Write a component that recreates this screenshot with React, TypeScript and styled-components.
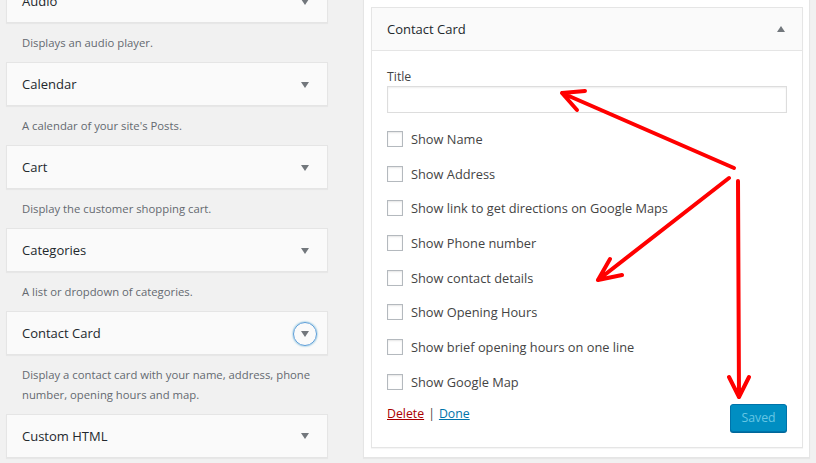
import { FC } from 'react'
import styled, { createGlobalStyle, css } from 'styled-components'

const GlobalStyle = createGlobalStyle`
  html, body {
    margin: 0;
    padding: 0;
    background: #f1f1f1;
    overflow: hidden;
  }

  body {
    font-family: 'Open Sans', 'Noto Sans', sans-serif;
    color: #444;
  }
`

interface AvailableWidget {
  title: string
  description: string
  focused?: boolean
}

const availableWidgets: AvailableWidget[] = [
  { title: 'Audio', description: 'Displays an audio player.' },
  { title: 'Calendar', description: "A calendar of your site's Posts." },
  { title: 'Cart', description: 'Display the customer shopping cart.' },
  { title: 'Categories', description: 'A list or dropdown of categories.' },
  {
    title: 'Contact Card',
    description: 'Display a contact card with your name, address, phone number, opening hours and map.',
    focused: true
  },
  { title: 'Custom HTML', description: '' }
]

const contactOptions = [
  'Show Name',
  'Show Address',
  'Show link to get directions on Google Maps',
  'Show Phone number',
  'Show contact details',
  'Show Opening Hours',
  'Show brief opening hours on one line',
  'Show Google Map'
]

const App: FC = () => {
  return (
    <>
      <GlobalStyle />
      <Page>
        <WidgetList>
          {availableWidgets.map((widget) => (
            <div key={widget.title}>
              <WidgetTop>
                <WidgetTitle>{widget.title}</WidgetTitle>
                <Toggle $focused={widget.focused}>
                  <Triangle />
                </Toggle>
              </WidgetTop>
              {widget.description && <WidgetDescription>{widget.description}</WidgetDescription>}
            </div>
          ))}
        </WidgetList>

        <SidebarColumn>
          <SidebarHolder>
            <Widget>
              <WidgetHeader>
                <HeaderTitle>Contact Card</HeaderTitle>
                <Triangle $up />
              </WidgetHeader>
              <WidgetInside>
                <FieldLabel>Title</FieldLabel>
                <TextInput type="text" />
                <OptionList>
                  {contactOptions.map((option) => (
                    <OptionRow key={option}>
                      <Checkbox type="checkbox" />
                      <span>{option}</span>
                    </OptionRow>
                  ))}
                </OptionList>
                <WidgetFooter>
                  <Links>
                    <DeleteLink href="#">Delete</DeleteLink>
                    <Separator>|</Separator>
                    <DoneLink href="#">Done</DoneLink>
                  </Links>
                  <SavedButton disabled>Saved</SavedButton>
                </WidgetFooter>
              </WidgetInside>
            </Widget>
          </SidebarHolder>
        </SidebarColumn>

        <Annotations viewBox="0 0 816 463" width="816" height="463">
          <g stroke="#ff0000" strokeWidth="4" strokeLinecap="round" strokeLinejoin="round" fill="none">
            <path d="M734 168 L562 93 M562 93 L585 91 M562 93 L577 110" />
            <path d="M729 178 L598 280 M598 280 L610 259 M598 280 L622 275" />
            <path d="M738 181 L739 397 M739 397 L729 377 M739 397 L749 377" />
          </g>
        </Annotations>
      </Page>
    </>
  )
}

const Page = styled.div`
  position: relative;
  display: flex;
  align-items: flex-start;
  width: 816px;
  height: 463px;
  overflow: hidden;
`

const WidgetList = styled.div`
  width: 322px;
  margin: -21px 0 0 6px;
  flex-shrink: 0;
`

const WidgetTop = styled.div`
  box-sizing: border-box;
  height: 44px;
  display: flex;
  align-items: center;
  justify-content: space-between;
  padding: 0 10px 0 15px;
  background: #fafafa;
  border: 1px solid #e5e5e5;
  box-shadow: 0 1px 1px rgba(0, 0, 0, 0.04);
`

const WidgetTitle = styled.h3`
  margin: 0;
  font-size: 13px;
  font-weight: 400;
  color: #23282d;
`

const Toggle = styled.span<{ $focused?: boolean }>`
  box-sizing: border-box;
  width: 24px;
  height: 24px;
  display: flex;
  align-items: center;
  justify-content: center;
  border-radius: 50%;
  margin-top: 1px;

  ${({ $focused }) =>
    $focused &&
    css`
      border: 1px solid #5b9dd9;
      box-shadow: 0 0 2px rgba(30, 140, 190, 0.8);
    `}
`

const Triangle = styled.span<{ $up?: boolean }>`
  width: 0;
  height: 0;
  border-left: 4.5px solid transparent;
  border-right: 4.5px solid transparent;
  ${({ $up }) =>
    $up
      ? css`
          border-bottom: 6px solid #72777c;
        `
      : css`
          border-top: 6px solid #72777c;
        `}
`

const WidgetDescription = styled.p`
  margin: 0;
  padding: 10px 0 9.5px 16px;
  font-size: 11.3px;
  line-height: 19.5px;
  color: #646970;
`

const SidebarColumn = styled.div`
  width: 447px;
  margin-left: 35px;
  flex-shrink: 0;
`

const SidebarHolder = styled.div`
  margin-top: -8px;
  padding: 14px 6px 9px 7px;
  background: #fff;
  border: 1px solid #e5e5e5;
  box-shadow: 0 1px 1px rgba(0, 0, 0, 0.04);
`

const Widget = styled.div`
  border: 1px solid #e5e5e5;
  background: #fff;
  box-shadow: 0 1px 1px rgba(0, 0, 0, 0.04);
`

const WidgetHeader = styled.div`
  height: 42px;
  display: flex;
  align-items: center;
  justify-content: space-between;
  padding: 0 17px 0 15px;
  background: #fafafa;
  border-bottom: 1px solid #e5e5e5;
`

const HeaderTitle = styled.h3`
  margin: 0 0 1px;
  font-size: 13px;
  font-weight: 400;
  color: #23282d;
`

const WidgetInside = styled.div`
  padding: 16px 15px 15px;
`

const FieldLabel = styled.label`
  display: block;
  font-size: 12.3px;
  line-height: 19px;
  color: #444;
`

const TextInput = styled.input`
  display: block;
  box-sizing: border-box;
  width: 100%;
  height: 27px;
  margin: 0;
  border: 1px solid #ddd;
  box-shadow: inset 0 1px 2px rgba(0, 0, 0, 0.07);
  background: #fff;
  font: inherit;
`

const OptionList = styled.div`
  display: grid;
  grid-auto-rows: 20px;
  row-gap: 14.7px;
  margin-top: 16px;
`

const OptionRow = styled.label`
  display: flex;
  align-items: center;
  gap: 8px;
  font-size: 12.8px;
  color: #444;
`

const Checkbox = styled.input`
  appearance: none;
  box-sizing: border-box;
  width: 16px;
  height: 16px;
  margin: 0;
  border: 1px solid #b4b9be;
  background: #fff;
  box-shadow: inset 0 1px 2px rgba(0, 0, 0, 0.1);
`

const WidgetFooter = styled.div`
  display: flex;
  justify-content: space-between;
  align-items: flex-start;
  margin-top: 12px;
`

const Links = styled.div`
  display: flex;
  gap: 4px;
  font-size: 12.3px;
  line-height: 19px;
`

const DeleteLink = styled.a`
  color: #a00;
  text-decoration: underline;
`

const DoneLink = styled.a`
  color: #0073aa;
  text-decoration: underline;
`

const Separator = styled.span`
  color: #444;
`

const SavedButton = styled.button`
  box-sizing: border-box;
  width: 57px;
  height: 28px;
  padding: 0;
  border: 1px solid #0073aa;
  border-radius: 3px;
  background: #008ec2;
  color: #66c6e4;
  font-family: inherit;
  font-size: 12.3px;
  box-shadow: 0 1px 0 #006799;
`

const Annotations = styled.svg`
  position: absolute;
  top: 0;
  left: 0;
  pointer-events: none;
`

export default App
